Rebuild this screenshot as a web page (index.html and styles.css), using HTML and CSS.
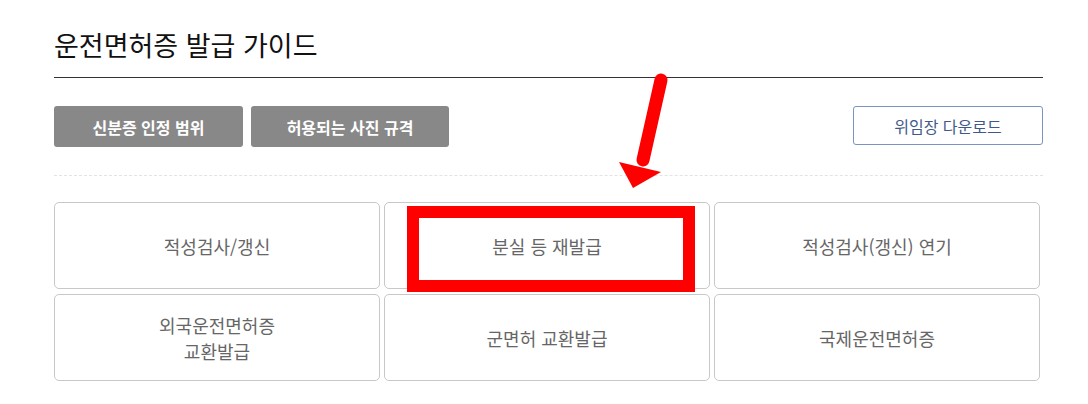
FILE: index.html
```html
<!DOCTYPE html>
<html lang="ko">
<head>
  <meta charset="UTF-8">
  <title>운전면허증 발급 가이드</title>
  <link rel="stylesheet" href="styles.css">
</head>
<body>
  <div class="wrap">
    <h2 class="title">운전면허증 발급 가이드</h2>

    <div class="toolbar">
      <div class="btn-group">
        <button class="btn-gray">신분증 인정 범위</button>
        <button class="btn-gray">허용되는 사진 규격</button>
      </div>
      <button class="btn-line">위임장 다운로드</button>
    </div>

    <div class="menu-grid">
      <a class="menu-item">적성검사/갱신</a>
      <a class="menu-item">분실 등 재발급</a>
      <a class="menu-item">적성검사(갱신) 연기</a>
      <a class="menu-item">외국운전면허증<br>교환발급</a>
      <a class="menu-item">군면허 교환발급</a>
      <a class="menu-item">국제운전면허증</a>
    </div>

    <!-- annotation -->
    <div class="highlight-box"></div>
    <svg class="arrow" width="80" height="130" viewBox="0 0 80 130">
      <line x1="70" y1="10" x2="52" y2="90" stroke="#ff0000" stroke-width="13" stroke-linecap="round"/>
      <polygon points="28,92 70,102 42,118" fill="#ff0000"/>
    </svg>
  </div>
</body>
</html>
```

FILE: styles.css
```css
body {
  margin: 0;
  padding: 0;
  background: #fff;
  font-family: "Noto Sans CJK KR", "Noto Sans", sans-serif;
}

.wrap {
  position: relative;
  width: 989px;
  margin-left: 54px;
  padding-top: 24px;
}

.title {
  margin: 0;
  padding-bottom: 12px;
  font-size: 27px;
  font-weight: 400;
  line-height: 41px;
  color: #111;
  border-bottom: 1px solid #333;
}

.toolbar {
  display: flex;
  justify-content: space-between;
  margin-top: 28px;
  padding-bottom: 28px;
  border-bottom: 1px dashed #e3e3e3;
}

.btn-group {
  display: flex;
  gap: 8px;
}

button {
  height: 41px;
  font-family: inherit;
  font-size: 16px;
  border-radius: 3px;
  cursor: pointer;
}

.btn-gray {
  background: #888;
  color: #fff;
  border: none;
  font-weight: 700;
}

.btn-gray:first-child {
  width: 189px;
}

.btn-gray:last-child {
  width: 198px;
}

.btn-line {
  width: 190px;
  height: 39px;
  background: #fff;
  color: #3f5a8a;
  border: 1px solid #7b93bf;
}

.menu-grid {
  display: grid;
  grid-template-columns: repeat(3, 326px);
  grid-auto-rows: 87px;
  column-gap: 4px;
  row-gap: 5px;
  margin-top: 26px;
}

.menu-item {
  display: flex;
  align-items: center;
  justify-content: center;
  text-align: center;
  border: 1px solid #c8c8c8;
  border-radius: 5px;
  font-size: 18px;
  line-height: 26px;
  color: #666;
  cursor: pointer;
}

.highlight-box {
  position: absolute;
  left: 353px;
  top: 206px;
  width: 264px;
  height: 62px;
  border: 12px solid #ff0000;
}

.arrow {
  position: absolute;
  left: 537px;
  top: 70px;
}
```
